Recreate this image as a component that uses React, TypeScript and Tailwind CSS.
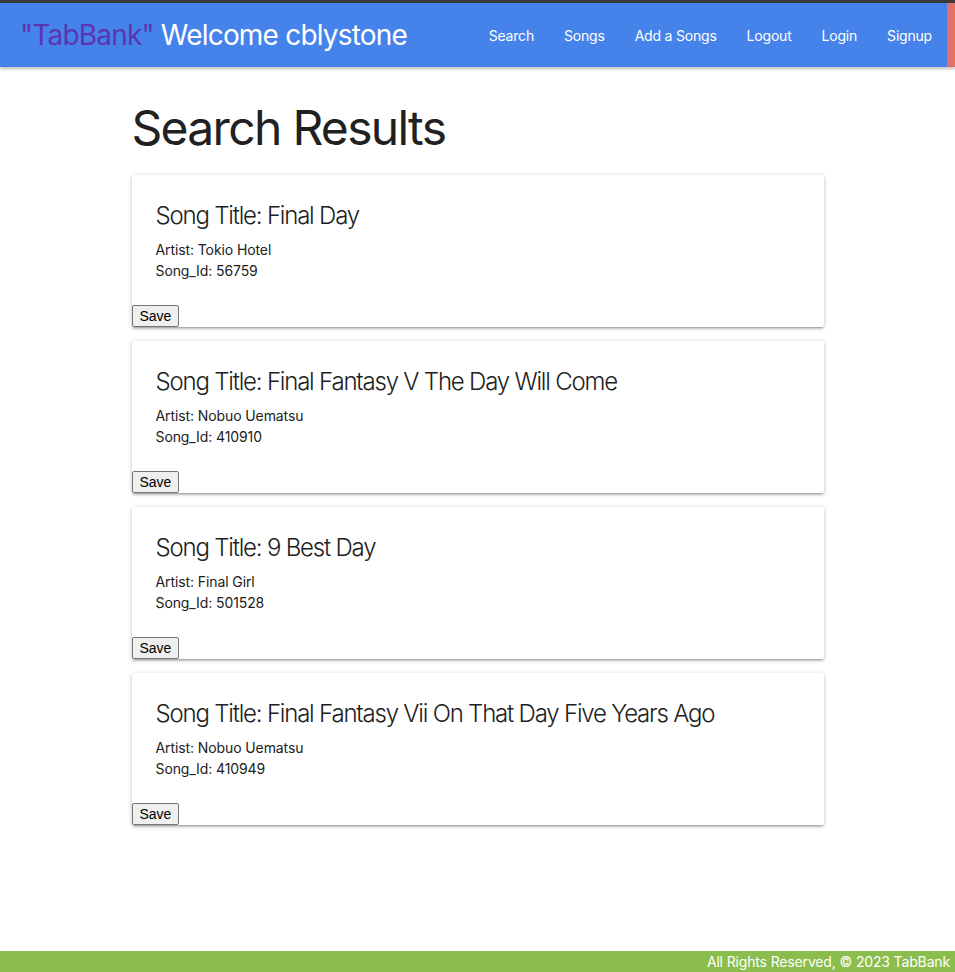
import React from "react";

type Song = {
  title: string;
  artist: string;
  id: number;
};

const results: Song[] = [
  { title: "Final Day", artist: "Tokio Hotel", id: 56759 },
  { title: "Final Fantasy V The Day Will Come", artist: "Nobuo Uematsu", id: 410910 },
  { title: "9 Best Day", artist: "Final Girl", id: 501528 },
  { title: "Final Fantasy Vii On That Day Five Years Ago", artist: "Nobuo Uematsu", id: 410949 },
];

const links = ["Search", "Songs", "Add a Songs", "Logout", "Login", "Signup"];

function SongCard({ song }: { song: Song }) {
  return (
    <div className="bg-white shadow-[0_2px_2px_0_rgba(0,0,0,0.14),0_3px_1px_-2px_rgba(0,0,0,0.12),0_1px_5px_0_rgba(0,0,0,0.2)] rounded-[2px]">
      <div className="p-6">
        <h4 className="text-[24px] leading-8 font-light text-[#212121] mt-px mb-[7px] tracking-[-1.2px]">
          Song Title: {song.title}
        </h4>
        <p className="text-[14px] leading-[21px] text-[#212121] tracking-[-0.1px]">Artist: {song.artist}</p>
        <p className="text-[14px] leading-[21px] text-[#212121] tracking-[-0.1px]">Song_Id: {song.id}</p>
      </div>
      <button className="block h-[22px] px-[7px] text-[14px] leading-none text-black bg-[#efefef] border border-[#767676] rounded-[2px] font-['Liberation_Sans',sans-serif]">
        Save
      </button>
    </div>
  );
}

export default function App() {
  return (
    <div className="min-h-[972px] flex flex-col bg-white font-['Inter',sans-serif]">
      <nav className="border-t-[3px] border-[#3a3a3a] bg-[#4583eb] h-[67px] flex shadow-[0_2px_3px_rgba(0,0,0,0.25)] z-10">
        <div className="flex-1 flex items-center justify-between pl-5">
          <div className="text-[28px] text-white tracking-[-0.8px]">
            <span className="text-[#5b35b1]">"TabBank"</span> Welcome cblystone
          </div>
          <ul className="flex h-full items-center">
            {links.map((l) => (
              <li key={l}>
                <a href="#" className="px-[15px] text-[14px] tracking-[-0.2px] text-white">
                  {l}
                </a>
              </li>
            ))}
          </ul>
        </div>
        <div className="w-2 bg-[#e07268]"></div>
      </nav>

      <main className="flex-1 w-[692px] mx-auto pb-10">
        <h2 className="mt-[31px] mb-[17px] text-[48px] leading-[60px] text-[#212121] tracking-[-1.7px]">
          Search Results
        </h2>
        <div className="flex flex-col gap-[14px]">
          {results.map((s) => (
            <SongCard key={s.id} song={s} />
          ))}
        </div>
      </main>

      <footer className="h-[21px] bg-[#8bbd4c] flex items-center justify-end pr-[5px]">
        <span className="text-[14px] text-white tracking-[-0.15px]">All Rights Reserved, © 2023 TabBank</span>
      </footer>
    </div>
  );
}
